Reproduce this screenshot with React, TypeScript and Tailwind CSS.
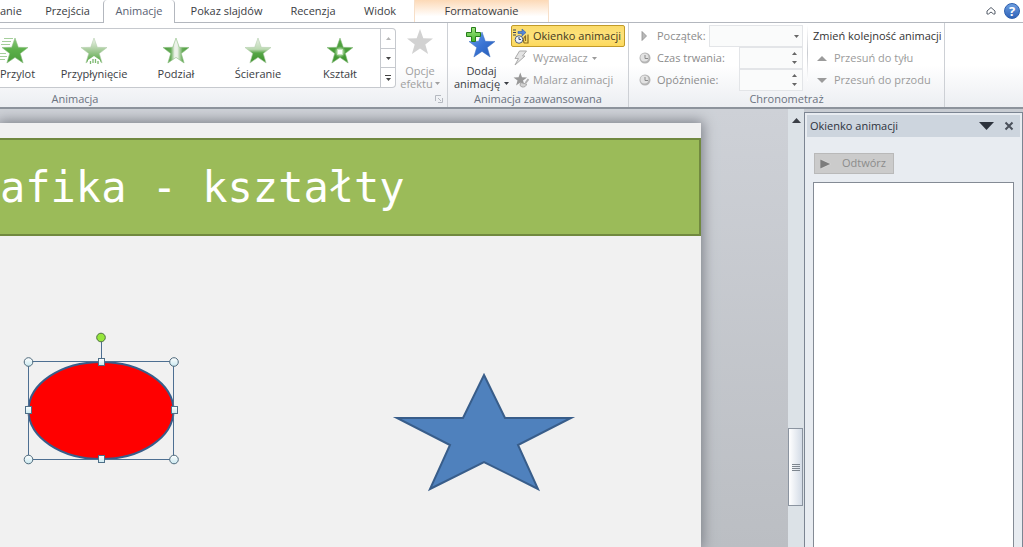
import { useState, type ReactNode } from "react";
import clsx from "clsx";

const STAR = "14,1 17.3,10.3 27,10.5 19.3,16.5 22.1,26 14,20.4 5.9,26 8.7,16.5 1,10.5 10.7,10.3";

type Effect = "flyIn" | "floatIn" | "split" | "wipe" | "shape";

const EFFECTS: { id: Effect; label: string }[] = [
  { id: "flyIn",   label: "Przylot" },
  { id: "floatIn", label: "Przypłynięcie" },
  { id: "split",   label: "Podział" },
  { id: "wipe",    label: "Ścieranie" },
  { id: "shape",   label: "Kształt" },
];

const TABS = [
  { label: "anie",          width: "w-8 pl-0 pr-3.5 text-right" },
  { label: "Przejścia",     width: "w-[71px]" },
  { label: "Animacje",      width: "w-[72px]" },
  { label: "Pokaz slajdów", width: "w-[103px]" },
  { label: "Recenzja",      width: "w-[70px]" },
  { label: "Widok",         width: "w-16" },
];

function EffectIcon({ effect }: { effect: Effect }) {
  return (
    <svg viewBox="0 0 34 28" className="h-7 w-[34px]" aria-hidden="true">
      <defs>
        <linearGradient id="fill-flyIn" x1="0" y1="0" x2="0" y2="1">
          <stop offset="0" stopColor="#8cc97c" />
          <stop offset="0.5" stopColor="#5aae48" />
          <stop offset="1" stopColor="#4a9c3b" />
        </linearGradient>
        <linearGradient id="fill-floatIn" x1="0" y1="0" x2="0" y2="1">
          <stop offset="0" stopColor="#f2f7ef" />
          <stop offset="0.4" stopColor="#b5d3aa" />
          <stop offset="1" stopColor="#4da33b" />
        </linearGradient>
        <linearGradient id="fill-split">
          <stop offset="0" stopColor="#459a36" />
          <stop offset="0.3" stopColor="#68ac5a" />
          <stop offset="0.45" stopColor="#edf2ea" />
          <stop offset="0.55" stopColor="#edf2ea" />
          <stop offset="0.75" stopColor="#68ac5a" />
          <stop offset="1" stopColor="#459a36" />
        </linearGradient>
        <linearGradient id="fill-wipe" x1="0" y1="0" x2="0" y2="1">
          <stop offset="0" stopColor="#eaf1e7" />
          <stop offset="0.45" stopColor="#bcd9b2" />
          <stop offset="0.6" stopColor="#56a646" />
          <stop offset="1" stopColor="#3c922c" />
        </linearGradient>
        <linearGradient id="fill-shape" x1="0" y1="0" x2="0" y2="1">
          <stop offset="0" stopColor="#55a545" />
          <stop offset="1" stopColor="#3f9530" />
        </linearGradient>
        <radialGradient id="shape-glow">
          <stop offset="0.3" stopColor="#e5f4df" />
          <stop offset="1" stopColor="#9ad18b" stopOpacity="0" />
        </radialGradient>
      </defs>
      <g transform={effect === "flyIn" ? "translate(1 0)" : "translate(3 0)"}>
        <polygon
          points={STAR}
          fill={`url(#fill-${effect})`}
          stroke={effect === "floatIn" || effect === "wipe" ? "#b4cfac" : "#8fbf84"}
          strokeWidth="0.6"
        />
      </g>
      {effect === "flyIn" && (
        <path d="M4 1.500h9M2 4.500h9M1 7.500h9M0 16.500h6M0 19.500h7M0 22.500h5" stroke="#a5cf9b" strokeWidth="1.200" />
      )}
      {effect === "floatIn" && (
        <>
          <path d="M10 28l1-5 6-4 6 4 1 5z" fill="#fff" />
          <path d="M13.500 27v-3M16 26v-4M18.500 26v-4M21 27v-3" stroke="#7db971" strokeWidth="1.300" />
        </>
      )}
      {effect === "shape" && (
        <>
          <circle cx="17" cy="15" r="6" fill="url(#shape-glow)" />
          <path d="M14.500 12.500h5v5h-5z" fill="#fff" stroke="#c8e6be" />
        </>
      )}
    </svg>
  );
}

function Triangle({ up, className }: { up?: boolean; className?: string }) {
  return (
    <svg viewBox="0 0 10 6" preserveAspectRatio="none" className={clsx("fill-current", className)} aria-hidden="true">
      <path d={up ? "M5 0l5 6H0z" : "M0 0h10L5 6z"} />
    </svg>
  );
}

function AddIcon() {
  return (
    <svg viewBox="0 0 32 32" className="h-8 w-8 shrink-0" aria-hidden="true">
      <defs>
        <linearGradient id="add-star" x1="0" y1="0" x2="1" y2="1">
          <stop offset="0" stopColor="#6ba2ec" />
          <stop offset="0.5" stopColor="#3a74d4" />
          <stop offset="1" stopColor="#2459b4" />
        </linearGradient>
        <linearGradient id="add-plus" x1="0" y1="0" x2="0" y2="1">
          <stop offset="0" stopColor="#a1e582" />
          <stop offset="1" stopColor="#47b82f" />
        </linearGradient>
      </defs>
      <polygon points={STAR} transform="translate(2 5)" fill="url(#add-star)" stroke="#3d6fc0" strokeWidth="0.500" />
      <path d="M5.500 1.500h4v5h5v4h-5v5h-4v-5h-5v-4h5z" fill="url(#add-plus)" stroke="#277d1b" />
    </svg>
  );
}

function PaneIcon() {
  return (
    <svg viewBox="0 0 16 16" className="size-4 shrink-0" aria-hidden="true">
      <path d="M0 2h3M0 4.500h3M0 7h3" stroke="#3b4252" />
      <path d="M5 3.500h4V1l4 3.500L9 8V5.500H5z" fill="#5687d8" stroke="#2e5ba8" strokeWidth="0.600" />
      <circle cx="6" cy="11.500" r="3.800" fill="#eef3fa" stroke="#4d5e7c" />
      <path d="M6 9v2.500h2" fill="none" stroke="#39475f" />
      <path d="M11 15c-1-3 0-6 1.500-7v5M11 15h4V6.500" fill="none" stroke="#8b6d1f" strokeWidth="1.200" />
    </svg>
  );
}

function BoltIcon() {
  return (
    <svg viewBox="0 0 16 16" className="size-4 shrink-0" aria-hidden="true">
      <path d="M6.500 1h7L9.500 6H12L2 15l3.500-6.500H2z" fill="#e4e4e4" stroke="#ababab" />
    </svg>
  );
}

function PainterIcon() {
  return (
    <svg viewBox="0 0 16 16" className="size-4 shrink-0" aria-hidden="true">
      <polygon points={STAR} transform="scale(0.52)" fill="#989898" />
      <path d="M15.500 7l-3 4" stroke="#b0b0b0" strokeWidth="2" />
      <path d="M7.500 10.500l6 1.500c0 2-2 3.500-4.500 3l-2-1.500z" fill="#d1d1d1" stroke="#999" strokeWidth="0.800" />
    </svg>
  );
}

function ClockIcon() {
  return (
    <svg viewBox="0 0 12 12" className="size-3" aria-hidden="true">
      <circle cx="6" cy="6" r="5.500" fill="#b4b4b4" />
      <circle cx="5.500" cy="5.500" r="4" fill="#e2e2e2" />
      <path d="M6 3v3.500h3" fill="none" stroke="#8a8a8a" />
    </svg>
  );
}

function StartIcon() {
  return (
    <svg viewBox="0 0 12 12" className="size-3" aria-hidden="true">
      <path d="M3 1.500l4.500 4.500L3 10.500z" fill="#b9b9b9" stroke="#8e8e8e" strokeWidth="0.800" />
    </svg>
  );
}

interface GroupProps {
  title: string;
  className?: string;
  titleClassName?: string;
  children: ReactNode;
}

function Group({ title, className, titleClassName, children }: GroupProps) {
  return (
    <section className={clsx("relative flex h-full shrink-0 flex-col border-r border-[#cdd0d5]", className)}>
      <div className="flex h-[69px] pt-0.5">{children}</div>
      <h2 className={clsx("text-center leading-4 text-[#6b7280]", titleClassName)}>{title}</h2>
    </section>
  );
}

function Spinner({ id, label }: { id: string; label: string }) {
  return (
    <div className="flex h-[22px] items-center">
      <ClockIcon />
      <label htmlFor={id} className="ml-1.5 flex-1">{label}</label>
      <div className="flex h-[22px] w-16 border border-[#e3e5e8] bg-[#fafbfb]">
        <input id={id} type="text" disabled className="w-0 flex-1 bg-transparent" />
        <div className="flex w-4 flex-col items-center justify-center gap-1.5 text-[#666]">
          <Triangle up className="h-[3px] w-[5px]" />
          <Triangle className="h-[3px] w-[5px]" />
        </div>
      </div>
    </div>
  );
}

function TabBar() {
  const [active, setActive] = useState("Animacje");

  return (
    <nav className="flex h-[23px] shrink-0 bg-white">
      {TABS.map((tab) => (
        <button
          key={tab.label}
          onClick={() => setActive(tab.label)}
          className={clsx(
            "shrink-0 whitespace-nowrap",
            tab.width,
            active === tab.label
              ? "rounded-t-sm border-x border-[#b3b7be] bg-white text-[#596273]"
              : "border-b border-[#b3b7be]",
          )}
        >
          {tab.label}
        </button>
      ))}
      <div className="flex flex-1 justify-between border-b border-[#b3b7be]">
        <button className="ml-0.5 w-[135px] border-x border-[#f7dfc8] bg-linear-to-b from-[#fcd9b6] to-white to-75%">
          Formatowanie
        </button>
        <div className="flex items-center gap-2 pr-[3px]">
          <button aria-label="Minimalizuj wstążkę">
            <svg viewBox="0 0 10 8" className="h-2 w-2.5" aria-hidden="true">
              <path d="M1 4l4-3.500L9 4v3H7.500L5 5 2.500 7H1z" fill="#fff" stroke="#555d69" />
            </svg>
          </button>
          <button
            aria-label="Pomoc"
            className="size-4 rounded-full border border-[#2c5fae] bg-linear-to-b from-[#6d9ee0] to-[#2f62b8] text-[13px] leading-[14px] font-bold text-white"
          >
            ?
          </button>
        </div>
      </div>
    </nav>
  );
}

function Ribbon() {
  return (
    <div className="flex h-[86px] shrink-0 border-b-2 border-[#8d939c] bg-linear-to-b from-white from-50% to-[#eceef2]">
      <Group title="Animacja" className="w-[448px]" titleClassName="w-[150px]">
        <div className="mt-[3px] flex h-[60px] w-[396px] rounded-r-sm border border-l-0 border-[#c6c9ce] bg-white">
          <div className="flex flex-1 overflow-hidden">
            {EFFECTS.map((effect) => (
              <button
                key={effect.id}
                className="flex w-[82px] shrink-0 flex-col items-center pt-2 first:w-[53px] first:items-start"
              >
                <EffectIcon effect={effect.id} />
                <span className="leading-[18px] whitespace-nowrap">{effect.label}</span>
              </button>
            ))}
          </div>
          <div className="flex w-[15px] flex-col divide-y divide-[#c6c9ce] border-l border-[#c6c9ce]">
            <button aria-label="W górę" disabled className="flex flex-1 items-center justify-center text-[#b5b5b5]">
              <Triangle up className="h-[3px] w-[5px]" />
            </button>
            <button aria-label="W dół" className="flex flex-1 items-center justify-center text-[#444]">
              <Triangle className="h-[3px] w-[5px]" />
            </button>
            <button aria-label="Więcej" className="flex flex-1 flex-col items-center justify-center gap-0.5 text-[#444]">
              <span className="h-px w-1.5 bg-current" />
              <Triangle className="h-[3px] w-[5px]" />
            </button>
          </div>
        </div>
        <button disabled className="flex w-12 flex-col items-center pt-[3px] leading-[13px] text-[#a0a0a0]">
          <svg viewBox="0 0 28 28" className="mb-2 h-7 w-7 shrink-0" aria-hidden="true">
            <polygon points={STAR} fill="#d2d2d2" />
          </svg>
          <span>Opcje</span>
          <span className="flex items-center gap-0.5">
            efektu <Triangle className="h-[3px] w-[5px]" />
          </span>
        </button>
        <svg viewBox="0 0 8 8" className="absolute right-1 bottom-1 size-2" aria-hidden="true">
          <path d="M.5 6V.5H6M3 3l3 3M7.500 3v4.500H3" fill="none" stroke="#b5b9c0" />
        </svg>
      </Group>

      <Group title="Animacja zaawansowana" className="w-[181px]">
        <button className="flex w-[63px] flex-col items-center pt-px pl-1 leading-[13px]">
          <AddIcon />
          <span className="mt-1.5">Dodaj</span>
          <span className="flex items-center gap-1">
            animację <Triangle className="h-[3px] w-[5px]" />
          </span>
        </button>
        <div className="flex w-[114px] flex-col whitespace-nowrap text-[#9b9b9b]">
          <button className="flex h-[22px] items-center gap-1 rounded-xs border border-[#c29b29] bg-linear-to-b from-[#fbdb6a] via-[#fde27b] to-[#fdd95c] pl-px text-[#43391f]">
            <PaneIcon /> Okienko animacji
          </button>
          <button disabled className="flex h-[22px] items-center gap-1 pl-0.5">
            <BoltIcon /> Wyzwalacz <Triangle className="h-[3px] w-[5px]" />
          </button>
          <button disabled className="flex h-[22px] items-center gap-1 pl-0.5">
            <PainterIcon /> Malarz animacji
          </button>
        </div>
      </Group>

      <Group title="Chronometraż" className="w-[316px]">
        <div className="ml-2.5 w-[164px] text-[#8c8c8c]">
          <div className="flex h-[22px] items-center">
            <StartIcon />
            <label htmlFor="start" className="ml-1.5 flex-1">Początek:</label>
            <div className="relative h-[22px] w-[94px]">
              <select id="start" disabled className="size-full appearance-none border border-[#e3e5e8] bg-[#fafbfb]" />
              <Triangle className="absolute top-2.5 right-1 h-[3px] w-[5px] text-[#666]" />
            </div>
          </div>
          <Spinner id="duration" label="Czas trwania:" />
          <Spinner id="delay" label="Opóźnienie:" />
        </div>
        <div className="mx-1 h-14 w-px bg-linear-to-b from-white via-[#c9ccd1] to-white" />
        <div className="flex flex-col pl-px whitespace-nowrap text-[#9b9b9b]">
          <h3 className="h-[22px] leading-[22px] text-[#333]">Zmień kolejność animacji</h3>
          <button disabled className="flex h-[22px] items-center gap-[7px] pl-1">
            <Triangle up className="h-[5px] w-2.5" /> Przesuń do tyłu
          </button>
          <button disabled className="flex h-[22px] items-center gap-[7px] pl-1">
            <Triangle className="h-[5px] w-2.5" /> Przesuń do przodu
          </button>
        </div>
      </Group>
    </div>
  );
}

function SelectedOval() {
  return (
    <svg viewBox="0 0 162 136" className="absolute top-[94px] left-5 h-[136px] w-[162px]" aria-label="Elipsa">
      <defs>
        <linearGradient id="handle" x1="0" y1="0" x2="0" y2="1">
          <stop offset="0" stopColor="#fff" />
          <stop offset="1" stopColor="#c9e8ef" />
        </linearGradient>
      </defs>
      <ellipse cx="81" cy="80.500" rx="72.500" ry="48.500" fill="#ff0000" stroke="#385d8a" strokeWidth="2" />
      <path d="M8.500 31.500h145v98H8.500zM81.500 31.500V12" fill="none" stroke="#4d6f92" />
      <circle cx="81" cy="7.500" r="4.300" fill="#96e63c" stroke="#4d7040" />
      {[[8.5, 32], [154, 32], [8.5, 129.5], [154, 129.5]].map(([x, y]) => (
        <circle key={`${x}-${y}`} cx={x} cy={y} r="4.300" fill="url(#handle)" stroke="#4f6a7c" />
      ))}
      {[[81, 32], [8, 80], [154, 80], [81, 129]].map(([x, y]) => (
        <rect key={`${x}-${y}`} x={x - 2.5} y={y - 3.5} width="6" height="7" fill="url(#handle)" stroke="#4f6f88" />
      ))}
    </svg>
  );
}

function Slide() {
  return (
    <main className="flex min-w-0 flex-1 overflow-hidden bg-linear-to-b from-[#ced1d7] to-[#bbbec3] pt-3.5 pr-[87px]">
      <div className="flex flex-1 flex-col bg-[#f1f1f1] shadow-[0_0_12px_2px_#7d8188]">
        <h1 className="mt-[15px] flex h-[98px] items-center border-2 border-l-0 border-[#71893f] bg-[#9bbb59] font-['DejaVu_Sans_Mono',monospace] text-[42px] whitespace-pre text-white">
          afika - kształty
        </h1>
        <div className="relative flex-1">
          <SelectedOval />
          <svg viewBox="0 0 190 126" className="absolute top-[134px] left-[390px] h-[126px] w-[190px]" aria-label="Gwiazda">
            <polygon
              points="94,5 115,48 181,48 128,75 148,119 94,92 40,119 60,75 7,48 73,48"
              fill="#4f81bd"
              stroke="#385d8a"
              strokeWidth="2"
              strokeMiterlimit="10"
            />
          </svg>
        </div>
      </div>
    </main>
  );
}

function ScrollBar() {
  return (
    <div className="flex w-4 shrink-0 flex-col items-center bg-[#dce2e7]">
      <button aria-label="Przewiń w górę" className="flex h-[22px] w-full items-center justify-center text-[#3b3f46]">
        <Triangle up className="h-[5px] w-[9px]" />
      </button>
      <div className="mt-auto mb-[41px] flex h-[78px] w-[15px] items-center justify-center self-start border border-[#8b94a0] bg-linear-to-r from-white to-[#d3dbe6]">
        <div className="flex flex-col gap-px">
          <span className="h-px w-2 bg-[#7e868f]" />
          <span className="h-px w-2 bg-[#7e868f]" />
          <span className="h-px w-2 bg-[#7e868f]" />
          <span className="h-px w-2 bg-[#7e868f]" />
        </div>
      </div>
    </div>
  );
}

function AnimationPane() {
  return (
    <aside className="mt-[3px] flex w-[219px] shrink-0 flex-col border border-b-0 border-[#7c8592] bg-[#e8ecf1] p-0.5 pb-0 text-[#2c323c]">
      <header className="flex h-[22px] items-center bg-[#cdd5de] pr-1.5 pl-[3px]">
        <h2 className="flex-1">Okienko animacji</h2>
        <button aria-label="Opcje okienka">
          <Triangle className="h-2 w-[15px]" />
        </button>
        <button aria-label="Zamknij" className="ml-2.5">
          <svg viewBox="0 0 10 10" className="size-2.5" aria-hidden="true">
            <path d="M1.500 1.500l7 7M8.500 1.500l-7 7" stroke="#4a505a" strokeWidth="2" />
          </svg>
        </button>
      </header>
      <button disabled className="mt-4 ml-[7px] flex h-[21px] w-20 items-center border border-[#b9b9b9] bg-[#cbcbcb] text-[#8c8c8c]">
        <svg viewBox="0 0 12 10" className="mr-2.5 ml-[5px] h-2.5 w-3" aria-hidden="true">
          <path d="M0 0l11 5-11 5z" fill="#7c7c7c" stroke="#eee" strokeWidth="0.500" />
        </svg>
        Odtwórz
      </button>
      <div className="mx-1.5 mt-2 flex-1 border border-b-0 border-[#848b95] bg-white" />
    </aside>
  );
}

export default function App() {
  return (
    <div className="flex h-screen flex-col overflow-hidden bg-white font-['Open_Sans',sans-serif] text-[11px] text-[#3a3d43]">
      <TabBar />
      <Ribbon />
      <div className="flex min-h-0 flex-1 bg-[#c8ccd2]">
        <Slide />
        <ScrollBar />
        <AnimationPane />
      </div>
    </div>
  );
}
